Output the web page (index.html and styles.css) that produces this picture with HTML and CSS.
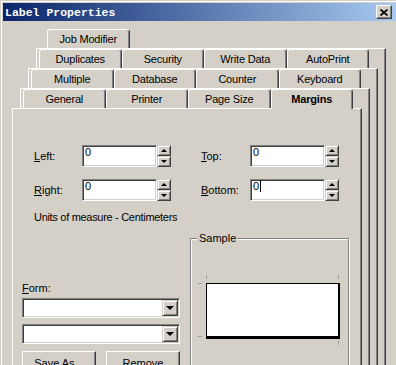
FILE: index.html
```html
<!DOCTYPE html>
<html lang="en">
<head>
  <meta charset="UTF-8">
  <meta name="viewport" content="width=device-width, initial-scale=1.0">
  <title>Label Properties</title>
  <link rel="stylesheet" href="styles.css">
</head>
<body>
  <div class="window">
    <div class="titlebar">
      <span class="title">Label Properties</span>
      <span class="close-btn">
        <svg width="8" height="7" viewBox="0 0 8 7"><path d="M0.5 0.5 L7.5 6.5 M7.5 0.5 L0.5 6.5" stroke="#000" stroke-width="1.7"/></svg>
      </span>
    </div>

    <div class="client">
      <div class="sheet">
        <div class="tabs">
          <div class="tab">Job Modifier</div>
        </div>
        <div class="page">
          <div class="sheet">
            <div class="tabs">
              <div class="tab">Duplicates</div>
              <div class="tab">Security</div>
              <div class="tab">Write Data</div>
              <div class="tab">AutoPrint</div>
            </div>
            <div class="page">
              <div class="sheet">
                <div class="tabs">
                  <div class="tab">Multiple</div>
                  <div class="tab">Database</div>
                  <div class="tab">Counter</div>
                  <div class="tab">Keyboard</div>
                </div>
                <div class="page">
                  <div class="sheet">
                    <div class="tabs">
                      <div class="tab">General</div>
                      <div class="tab">Printer</div>
                      <div class="tab">Page Size</div>
                      <div class="tab active">Margins</div>
                    </div>
                    <div class="page front">

                      <div class="margins">
                        <div class="field-row">
                          <span class="field-label"><u>L</u>eft:</span>
                          <div class="edit">0</div>
                          <div class="spin">
                            <div class="spin-btn"><span class="arrow-up"></span></div>
                            <div class="spin-btn"><span class="arrow-down"></span></div>
                          </div>
                          <span class="field-label second"><u>T</u>op:</span>
                          <div class="edit">0</div>
                          <div class="spin">
                            <div class="spin-btn"><span class="arrow-up"></span></div>
                            <div class="spin-btn"><span class="arrow-down"></span></div>
                          </div>
                        </div>
                        <div class="field-row">
                          <span class="field-label"><u>R</u>ight:</span>
                          <div class="edit">0</div>
                          <div class="spin">
                            <div class="spin-btn"><span class="arrow-up"></span></div>
                            <div class="spin-btn"><span class="arrow-down"></span></div>
                          </div>
                          <span class="field-label second"><u>B</u>ottom:</span>
                          <div class="edit">0<span class="caret"></span></div>
                          <div class="spin">
                            <div class="spin-btn"><span class="arrow-up"></span></div>
                            <div class="spin-btn"><span class="arrow-down"></span></div>
                          </div>
                        </div>
                        <div class="units">Units of measure - Centimeters</div>
                      </div>

                      <div class="lower">
                        <div class="form-col">
                          <div class="form-label"><u>F</u>orm:</div>
                          <div class="combo"><span class="drop"><span class="arrow-down big"></span></span></div>
                          <div class="combo second"><span class="drop"><span class="arrow-down big"></span></span></div>
                          <div class="buttons">
                            <button class="btn">Save As...</button>
                            <button class="btn">Remove</button>
                          </div>
                        </div>

                        <div class="group">
                          <div class="group-title">Sample</div>
                          <svg class="sample" width="156" height="110" viewBox="0 0 156 110">
                            <rect x="15" y="38" width="134" height="56" fill="#000"/>
                            <rect x="16" y="39" width="131" height="52" fill="#fff"/>
                            <path d="M15.5 30 V34 M147.5 30 V34 M7 38.5 H11 M7 91.5 H11 M147.5 96 V100" stroke="#9a9a9a" stroke-width="1"/>
                          </svg>
                        </div>
                      </div>

                    </div>
                  </div>
                </div>
              </div>
            </div>
          </div>
        </div>
      </div>
    </div>
  </div>
</body>
</html>
```

FILE: styles.css
```css
body {
  margin: 0;
  background: #d4d0c8;
  overflow: hidden;
  font-family: "Liberation Sans", Arial, sans-serif;
  font-size: 11px;
  color: #000;
}

.window {
  width: 396px;
  height: 365px;
  box-sizing: border-box;
  padding: 2px 0 0 2px;
  border-top: 1px solid #d4d0c8;
  border-left: 1px solid #d4d0c8;
  box-shadow: inset 1px 1px #fff;
  background: #d4d0c8;
}

.titlebar {
  display: flex;
  align-items: center;
  justify-content: space-between;
  height: 18px;
  padding-left: 2px;
  background: linear-gradient(to right, #0a246a, #a6caf0);
}

.title {
  color: #fff;
  font-family: "Liberation Mono", "Courier New", monospace;
  font-weight: bold;
  font-size: 11.5px;
}

.close-btn {
  display: flex;
  align-items: center;
  justify-content: center;
  width: 16px;
  height: 14px;
  box-sizing: border-box;
  margin-right: 4px;
  background: #d4d0c8;
  border: 1px solid;
  border-color: #fff #404040 #404040 #fff;
  box-shadow: inset -1px -1px #808080;
}

.client {
  padding-top: 8px;
}

.client > .sheet {
  width: 350px;
  margin-left: 33px;
}

.page > .sheet {
  margin: 0 7px 0 -9px;
}

.tabs {
  display: flex;
  height: 19px;
  padding: 0 9px 0 11px;
}

.tab {
  flex: 0 0 82.5px;
  box-sizing: border-box;
  height: 19px;
  background: #d4d0c8;
  border-top: 1px solid #fff;
  border-left: 1px solid #fff;
  border-right: 1px solid #404040;
  box-shadow: inset -1px 0 #808080;
  border-radius: 3px 3px 0 0;
  text-align: center;
  line-height: 18px;
  letter-spacing: -0.2px;
}

.tab.active {
  height: 20px;
  margin-bottom: -1px;
  position: relative;
  z-index: 1;
  font-weight: bold;
}

.page {
  background: #d4d0c8;
  border-top: 1px solid #fff;
  border-left: 1px solid #fff;
  border-right: 1px solid #404040;
  box-shadow: inset -1px 0 #808080;
}

.front {
  height: 300px;
}

/* margin fields */
.margins {
  padding: 36px 0 0 21px;
}

.field-row {
  display: flex;
  align-items: center;
  height: 22px;
}

.field-row + .field-row {
  margin-top: 12px;
}

.field-label {
  width: 48px;
  line-height: 13px;
}

.field-label.second {
  width: 49px;
  margin-left: 30px;
}

.edit {
  width: 75px;
  height: 22px;
  box-sizing: border-box;
  padding: 0 1px;
  background: #fff;
  border: 1px solid;
  border-color: #808080 #fff #fff #808080;
  box-shadow: inset 1px 1px #404040, inset -1px -1px #d4d0c8;
  line-height: 13px;
  padding-left: 2px;
}

.caret {
  display: inline-block;
  width: 1px;
  height: 12px;
  margin-left: 1px;
  background: #000;
  vertical-align: -2px;
}

.spin {
  display: flex;
  flex-direction: column;
  width: 14px;
  height: 22px;
}

.spin-btn {
  display: flex;
  align-items: center;
  justify-content: center;
  height: 11px;
  box-sizing: border-box;
  background: #d4d0c8;
  border: 1px solid;
  border-color: #d4d0c8 #404040 #404040 #d4d0c8;
  box-shadow: inset 1px 1px #fff, inset -1px -1px #808080;
}

.arrow-up {
  width: 0;
  height: 0;
  border-left: 3px solid transparent;
  border-right: 3px solid transparent;
  border-bottom: 3px solid #000;
}

.arrow-down {
  width: 0;
  height: 0;
  border-left: 3px solid transparent;
  border-right: 3px solid transparent;
  border-top: 3px solid #000;
}

.arrow-down.big {
  border-left-width: 4px;
  border-right-width: 4px;
  border-top-width: 4px;
}

.units {
  margin-top: 10px;
  line-height: 13px;
  letter-spacing: -0.3px;
}

/* lower part */
.lower {
  display: flex;
  gap: 10px;
  margin-top: 8px;
  padding-left: 9px;
}

.form-col {
  width: 158px;
  padding-top: 50px;
}

.form-label {
  line-height: 13px;
}

.combo {
  display: flex;
  justify-content: flex-end;
  align-items: center;
  width: 158px;
  height: 20px;
  box-sizing: border-box;
  margin-top: 3px;
  padding-right: 1px;
  background: #fff;
  border: 1px solid;
  border-color: #808080 #fff #fff #808080;
  box-shadow: inset 1px 1px #404040, inset -1px -1px #d4d0c8;
}

.combo.second {
  margin-top: 6px;
}

.drop {
  display: flex;
  align-items: center;
  justify-content: center;
  width: 16px;
  height: 16px;
  box-sizing: border-box;
  background: #d4d0c8;
  border: 1px solid;
  border-color: #d4d0c8 #404040 #404040 #d4d0c8;
  box-shadow: inset 1px 1px #fff, inset -1px -1px #808080;
}

.buttons {
  display: flex;
  gap: 10px;
  margin-top: 7px;
}

.btn {
  width: 74px;
  height: 23px;
  padding: 0;
  background: #d4d0c8;
  border: 1px solid;
  border-color: #fff #404040 #404040 #fff;
  box-shadow: inset -1px -1px #808080;
  font-family: "Liberation Sans", Arial, sans-serif;
  font-size: 11px;
  color: #000;
}

.group {
  width: 159px;
  height: 200px;
  box-sizing: border-box;
  margin-top: 6px;
  border: 1px solid #808080;
  box-shadow: inset 1px 1px #fff, 1px 1px #fff;
}

.group-title {
  width: fit-content;
  margin: -7px 0 0 6px;
  padding: 0 2px;
  background: #d4d0c8;
  line-height: 13px;
}

.sample {
  display: block;
}
```
